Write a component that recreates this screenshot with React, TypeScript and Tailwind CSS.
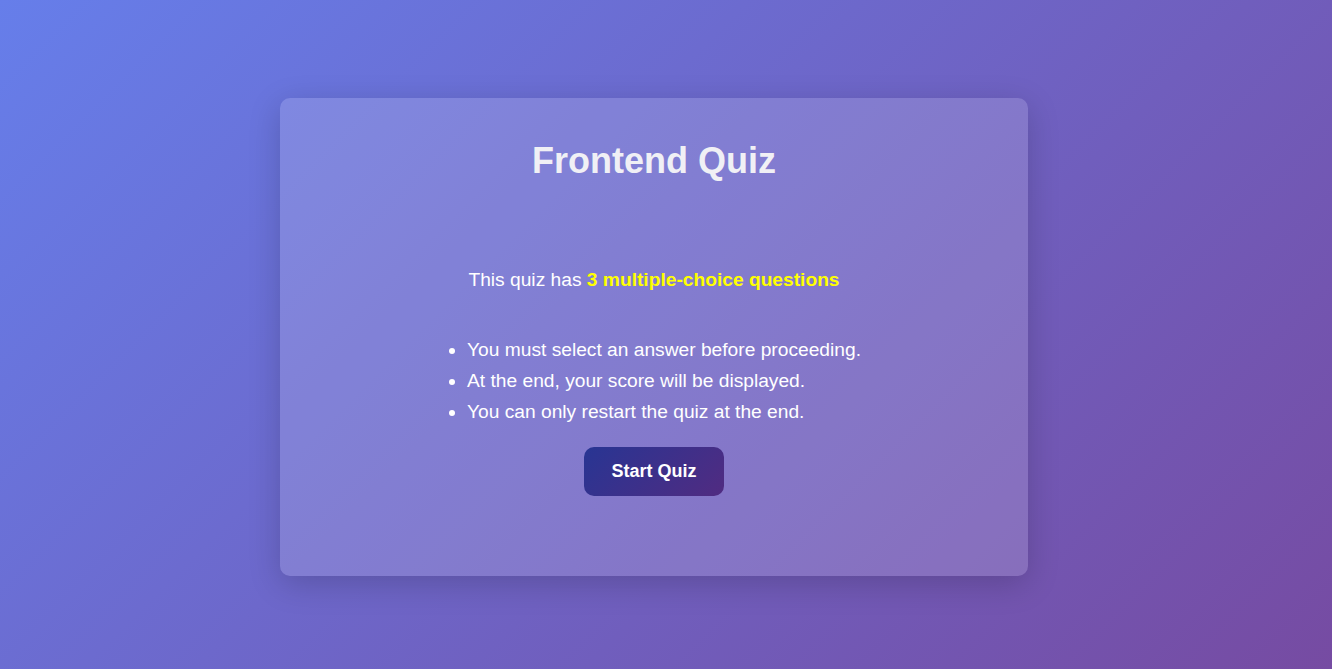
export default function App() {
  return (
    <div
      className="min-h-screen w-full bg-[linear-gradient(135deg,#667eea_0%,#764ba2_100%)] pt-[98px]"
      style={{ fontFamily: '"Liberation Sans", Arial, sans-serif' }}
    >
      <div className="ml-[280px] flex h-[478px] w-[748px] flex-col items-center rounded-[10px] bg-white/15 pt-[42px] shadow-[0_8px_32px_rgba(0,0,0,0.18)]">
        <h1 className="text-[36px] font-bold leading-[41px] text-[#f0f0f5]">Frontend Quiz</h1>
        <p className="mt-[88px] text-[19.2px] leading-[22px] text-white">
          This quiz has <span className="font-bold text-[#ffff00]">3 multiple-choice questions</span>
        </p>
        <ul className="mt-[43px] list-disc pl-[20px] text-left text-[19.2px] leading-[31px] text-white">
          <li>You must select an answer before proceeding.</li>
          <li>At the end, your score will be displayed.</li>
          <li>You can only restart the quiz at the end.</li>
        </ul>
        <button className="mt-[20px] h-[49px] w-[140px] rounded-[10px] bg-[linear-gradient(135deg,#283593,#512b81)] text-[18px] font-bold text-white">
          Start Quiz
        </button>
      </div>
    </div>
  );
}
